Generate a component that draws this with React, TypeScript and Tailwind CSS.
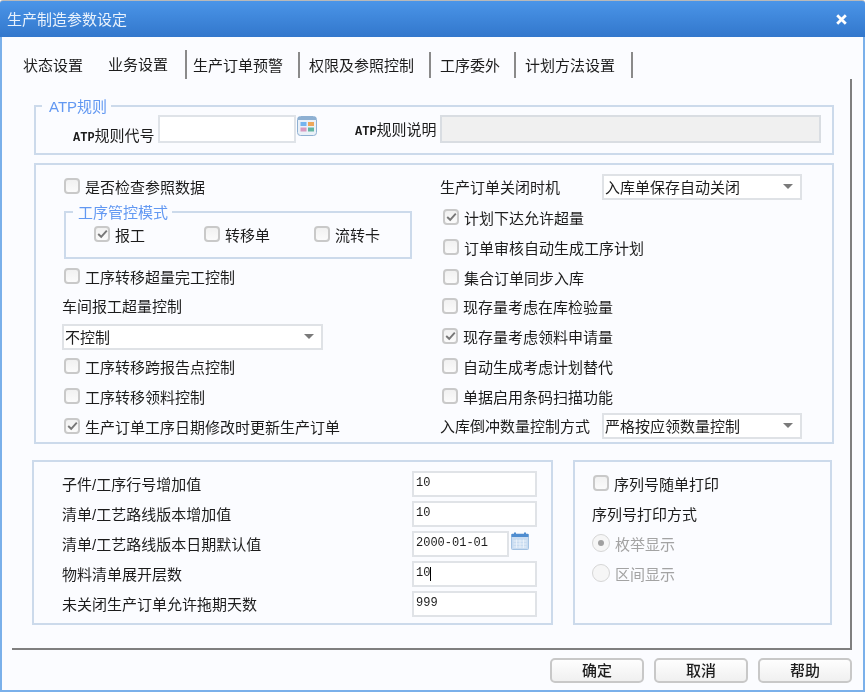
import React from "react";

function Box({ checked }: { checked?: boolean }) {
  return (
    <span className="mb-[3px] flex h-[16px] w-[16px] shrink-0 items-center justify-center rounded-[4px] border-2 border-[#c9c9c9] bg-gradient-to-b from-[#f1f1f1] to-[#fbfbfb]">
      {checked && (
        <svg width="11" height="10" viewBox="0 0 11 10" fill="none">
          <path d="M1.2 5 L4.2 7.8 L9.8 1.6" stroke="#777777" strokeWidth="1.9" />
        </svg>
      )}
    </span>
  );
}

function Check({ label, checked, cls }: { label: string; checked?: boolean; cls?: string }) {
  return (
    <div className={"flex h-[30px] items-center " + (cls ?? "")}>
      <Box checked={checked} />
      <span className="ml-[5px] whitespace-nowrap">{label}</span>
    </div>
  );
}

function Select({ value, w }: { value: string; w: string }) {
  return (
    <div className={"flex h-[26px] items-center justify-between border-2 border-[#dfe2e6] bg-white pl-[1px] pr-[7px] " + w}>
      <span className="whitespace-nowrap">{value}</span>
      <span className="mb-[2px] h-0 w-0 border-x-[5px] border-t-[5px] border-x-transparent border-t-[#7a7a7a]" />
    </div>
  );
}

function Legend({ children, cls }: { children: React.ReactNode; cls: string }) {
  return <span className={"absolute top-[-8px] bg-[#fbfcff] leading-[16px] text-[#6298f2] " + cls}>{children}</span>;
}

function Field({ children, w }: { children?: React.ReactNode; w: string }) {
  return (
    <div className={"flex h-[26px] items-center border-2 border-[#e0e3e7] bg-white pb-[2px] pl-[2px] font-['Liberation_Mono',monospace] text-[12px] " + w}>
      {children}
    </div>
  );
}

function NumRow({ label, value, caret }: { label: string; value: string; caret?: boolean }) {
  return (
    <div className="flex h-[26px] items-center">
      <span className="w-[378px] whitespace-nowrap pl-[28px]">{label}</span>
      <Field w="w-[125px]">
        <span>{value}</span>
        {caret && <span className="mt-[2px] h-[14px] w-px bg-black" />}
      </Field>
    </div>
  );
}

function Radio({ label, selected }: { label: string; selected?: boolean }) {
  return (
    <div className="flex h-[30px] items-center text-[#a3a3a3]">
      <span className="mb-[3px] flex h-[18px] w-[18px] items-center justify-center rounded-full border border-[#d6d6d6] bg-[#f6f6f6]">
        {selected && <span className="h-[6px] w-[6px] rounded-full bg-[#a0a0a0]" />}
      </span>
      <span className="ml-[5px]">{label}</span>
    </div>
  );
}

function Button({ label }: { label: string }) {
  return (
    <div className="flex h-[25px] w-[94px] items-center justify-center rounded-[5px] border-2 border-[#c8c8c8] bg-gradient-to-b from-[#fefefe] to-[#f0f0f0] font-medium">
      {label}
    </div>
  );
}

const tabs = [
  { label: "状态设置", w: "w-[85px] h-[27px]", sep: false, pl: "pl-[11px]" },
  { label: "业务设置", w: "w-[90px] h-[29px] -mt-[2px] pb-[1px]", sep: true, pl: "pl-[11px]" },
  { label: "生产订单预警", w: "w-[113px] h-[26px]", sep: true, pl: "pl-[6px]" },
  { label: "权限及参照控制", w: "w-[131px] h-[26px]", sep: true, pl: "pl-[9px]" },
  { label: "工序委外", w: "w-[85px] h-[26px]", sep: true, pl: "pl-[9px]" },
  { label: "计划方法设置", w: "w-[117px] h-[26px]", sep: true, pl: "pl-[9px]" },
];

export default function App() {
  return (
    <div className="flex h-[692px] w-[865px] flex-col overflow-hidden bg-[#fbfcff] font-['Liberation_Sans','Noto_Sans_CJK_SC',sans-serif] text-[15px] leading-none text-[#1c1c1c] blur-[0.35px]">
      <div className="flex h-[37px] shrink-0 items-center justify-between rounded-t-[3px] border-t border-[#b9b9b9] bg-gradient-to-b from-[#4b95e8] to-[#3277cc] pl-[7px] pr-[18px] text-[#e9f2fc]">
        <span>生产制造参数设定</span>
        <svg width="11" height="11" viewBox="0 0 11 11" fill="none">
          <path d="M1.2 1.2 L9.8 9.8 M9.8 1.2 L1.2 9.8" stroke="#ffffff" strokeWidth="2.8" />
        </svg>
      </div>

      <div className="flex flex-1 flex-col border-x-2 border-b-2 border-[#7ab0ea] pl-[10px]">
        <div className="mt-[15px] flex h-[27px]">
          {tabs.map((t) => (
            <div
              key={t.label}
              className={"flex items-center whitespace-nowrap " + t.w + " " + t.pl + (t.sep ? " border-r-2 border-[#8a8a8a]" : "")}
            >
              {t.label}
            </div>
          ))}
        </div>

        <div className="h-[571px] w-[840px] border-b-2 border-r-2 border-[#7f7f7f] pl-[22px] pt-[26px]">
          <div className="relative flex h-[50px] w-[800px] border-2 border-[#ccdaeb]">
            <Legend cls="left-[6px] pl-[7px] pr-[4px]">ATP规则</Legend>
            <div className="ml-[37px] mt-[8px] flex h-[28px] items-center">
              <span className="mt-[14px] w-[85px] whitespace-nowrap">
                <span className="font-['Liberation_Mono',monospace] text-[12px] font-bold">ATP</span>规则代号
              </span>
              <div className="h-[28px] w-[138px] border-2 border-[#dfe3e8] bg-white" />
              <svg className="mb-[6px] ml-[1px]" width="20" height="20" viewBox="0 0 20 20">
                <rect x="0.5" y="0.5" width="19" height="19" rx="3" fill="#eaf1f8" stroke="#8eb0d2" />
                <rect x="1" y="1" width="18" height="3" fill="#8eb0d2" />
                <rect x="3.5" y="6" width="6" height="4" fill="#74b4ee" />
                <rect x="11" y="6" width="6" height="4" fill="#eda75b" />
                <rect x="3.5" y="11.5" width="6" height="4" fill="#d79ac0" />
                <rect x="11" y="11.5" width="6" height="4" fill="#62b5a2" />
              </svg>
              <span className="ml-[38px] mt-[2px] w-[85px] whitespace-nowrap">
                <span className="font-['Liberation_Mono',monospace] text-[12px] font-bold">ATP</span>规则说明
              </span>
              <div className="h-[28px] w-[381px] border-2 border-[#d9dde2] bg-[#f0f0f0]" />
            </div>
          </div>

          <div className="mt-[8px] flex h-[281px] w-[800px] border-2 border-[#ccdaeb]">
            <div className="flex w-[404px] shrink-0 flex-col pl-[26px] pt-[7px]">
              <Check cls="ml-[2px]" label="是否检查参照数据" />
              <div className="relative ml-[2px] mt-[9px] h-[48px] w-[348px] border-2 border-[#ccdaeb]">
                <Legend cls="left-[7px] pl-[5px] pr-[4px]">工序管控模式</Legend>
                <div className="flex pt-[7px]">
                  <Check cls="ml-[28px] w-[110px]" label="报工" checked />
                  <Check cls="w-[110px]" label="转移单" />
                  <Check label="流转卡" />
                </div>
              </div>
              <Check cls="ml-[2px] mt-[3px]" label="工序转移超量完工控制" />
              <div className="flex h-[28px] items-center">车间报工超量控制</div>
              <Select value="不控制" w="mt-[4px] w-[261px]" />
              <Check cls="ml-[2px] mt-[2px]" label="工序转移跨报告点控制" />
              <Check cls="ml-[2px]" label="工序转移领料控制" />
              <Check cls="ml-[2px]" label="生产订单工序日期修改时更新生产订单" checked />
            </div>
            <div className="flex flex-col pt-[9px]">
              <div className="flex items-center">
                <span className="w-[162px]">生产订单关闭时机</span>
                <Select value="入库单保存自动关闭" w="w-[200px]" />
              </div>
              <Check cls="ml-[3px] mt-[3px]" label="计划下达允许超量" checked />
              <Check cls="ml-[3px]" label="订单审核自动生成工序计划" />
              <Check cls="ml-[3px]" label="集合订单同步入库" />
              <Check cls="-mt-[1px] ml-[2px]" label="现存量考虑在库检验量" />
              <Check cls="ml-[2px]" label="现存量考虑领料申请量" checked />
              <Check cls="ml-[2px]" label="自动生成考虑计划替代" />
              <Check cls="ml-[2px]" label="单据启用条码扫描功能" />
              <div className="mt-[1px] flex items-center">
                <span className="w-[162px] whitespace-nowrap">入库倒冲数量控制方式</span>
                <Select value="严格按应领数量控制" w="w-[200px]" />
              </div>
            </div>
          </div>

          <div className="-ml-[2px] mt-[16px] flex">
            <div className="flex h-[165px] w-[521px] flex-col gap-[4px] border-2 border-[#ccdaeb] pt-[9px]">
              <NumRow label="子件/工序行号增加值" value="10" />
              <NumRow label="清单/工艺路线版本增加值" value="10" />
              <div className="flex h-[26px] items-center">
                <span className="w-[378px] whitespace-nowrap pl-[28px]">清单/工艺路线版本日期默认值</span>
                <Field w="w-[97px]">2000-01-01</Field>
                <svg className="mb-[6px] ml-[2px]" width="18" height="18" viewBox="0 0 18 18">
                  <rect x="0.5" y="2" width="17" height="15.5" rx="1" fill="#c9dcf1" stroke="#a3c2e2" />
                  <rect x="0.5" y="2" width="17" height="3" fill="#4f8dd0" />
                  <rect x="3" y="0.5" width="2" height="3" fill="#4f8dd0" />
                  <rect x="13" y="0.5" width="2" height="3" fill="#4f8dd0" />
                  <path d="M2.5 9 H15.5 M2.5 12 H15.5 M2.5 15 H15.5 M5.5 7.5 V16 M9 7.5 V16 M12.5 7.5 V16" stroke="#eef4fb" strokeWidth="0.8" />
                </svg>
              </div>
              <NumRow label="物料清单展开层数" value="10" caret />
              <NumRow label="未关闭生产订单允许拖期天数" value="999" />
            </div>
            <div className="ml-[20px] flex h-[165px] w-[259px] flex-col border-2 border-[#ccdaeb] pl-[17px] pt-[7px]">
              <Check cls="ml-[1px]" label="序列号随单打印" />
              <div className="flex h-[30px] items-center">序列号打印方式</div>
              <Radio label="枚举显示" selected />
              <Radio label="区间显示" />
            </div>
          </div>
        </div>

        <div className="mt-[8px] flex w-[840px] justify-end gap-[10px]">
          <Button label="确定" />
          <Button label="取消" />
          <Button label="帮助" />
        </div>
      </div>
    </div>
  );
}
